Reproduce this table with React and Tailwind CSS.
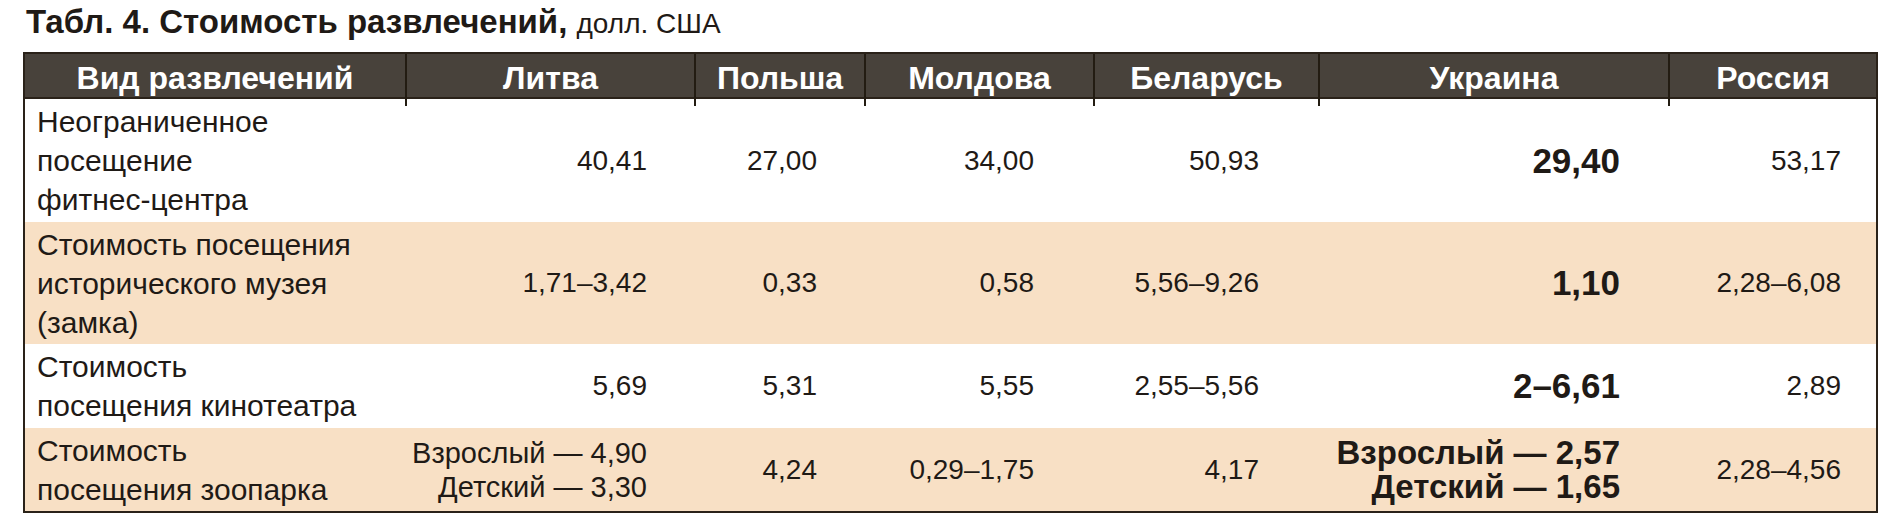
import React from 'react';

const countries = ['Литва', 'Польша', 'Молдова', 'Беларусь', 'Украина', 'Россия'];

// right padding of the number cells, per column
const padRight = ['pr-[47px]', 'pr-[47px]', 'pr-[59px]', 'pr-[59px]', 'pr-[48px]', 'pr-[35px]'];

const rows = [
  {
    label: ['Неограниченное', 'посещение', 'фитнес-центра'],
    values: [['40,41'], ['27,00'], ['34,00'], ['50,93'], ['29,40'], ['53,17']],
    height: 'h-[123px]',
    bg: 'bg-white',
  },
  {
    label: ['Стоимость посещения', 'исторического музея', '(замка)'],
    values: [['1,71–3,42'], ['0,33'], ['0,58'], ['5,56–9,26'], ['1,10'], ['2,28–6,08']],
    height: 'h-[122px]',
    bg: 'bg-[#f8e0c5]',
  },
  {
    label: ['Стоимость', 'посещения кинотеатра'],
    values: [['5,69'], ['5,31'], ['5,55'], ['2,55–5,56'], ['2–6,61'], ['2,89']],
    height: 'h-[84px]',
    bg: 'bg-white',
  },
  {
    label: ['Стоимость', 'посещения зоопарка'],
    values: [
      ['Взрослый — 4,90', 'Детский — 3,30'],
      ['4,24'],
      ['0,29–1,75'],
      ['4,17'],
      ['Взрослый — 2,57', 'Детский — 1,65'],
      ['2,28–4,56'],
    ],
    height: 'h-[83px]',
    bg: 'bg-[#f8e0c5]',
  },
];

const cellText = (v, j) => {
  if (j === 4) {
    return v.length > 1 ? 'font-bold text-[33px] leading-[34px]' : 'font-bold text-[35px] leading-[40px]';
  }
  return v.length > 1 ? 'text-[29px] leading-[34px]' : 'text-[28px] leading-[34px]';
};

const App = () => {
  return (
    <div className="w-[1896px] h-[525px] bg-white pl-[23px] text-[#1f1a16] font-['Liberation_Sans',Arial,sans-serif]">
      <h1 className="pt-[2px] pl-[3px] mb-[8px] leading-[40px] text-[33px]">
        <span className="font-bold">Табл. 4. Стоимость развлечений,</span>{' '}
        <span className="text-[28px]">долл. США</span>
      </h1>

      <div className="w-[1855px] border-2 border-[#2a2219]">
        <div className="grid grid-cols-[380px_289px_170px_229px_225px_350px_208px] h-[45px] bg-[#48423b] border-b-2 border-[#2a2219] text-white font-bold text-[32px]">
          <div className="flex items-center justify-center pb-[4px]">Вид развлечений</div>
          {countries.map((c) => (
            <div key={c} className="flex items-center justify-center pb-[4px] border-l-2 border-[#231c12]">
              {c}
            </div>
          ))}
        </div>

        {rows.map((row, i) => (
          <div
            key={i}
            className={`grid grid-cols-[380px_289px_170px_229px_225px_350px_208px] ${row.height} ${row.bg}`}
          >
            <div className="flex flex-col justify-center pl-[12px] text-[30px] leading-[39px]">
              {row.label.map((l) => (
                <div key={l}>{l}</div>
              ))}
            </div>
            {row.values.map((v, j) => (
              <div key={j} className={`flex flex-col justify-center items-end ${padRight[j]} ${cellText(v, j)}`}>
                {v.map((line) => (
                  <div key={line} className="whitespace-nowrap">
                    {line}
                  </div>
                ))}
              </div>
            ))}
          </div>
        ))}
      </div>
    </div>
  );
};

export default App;
